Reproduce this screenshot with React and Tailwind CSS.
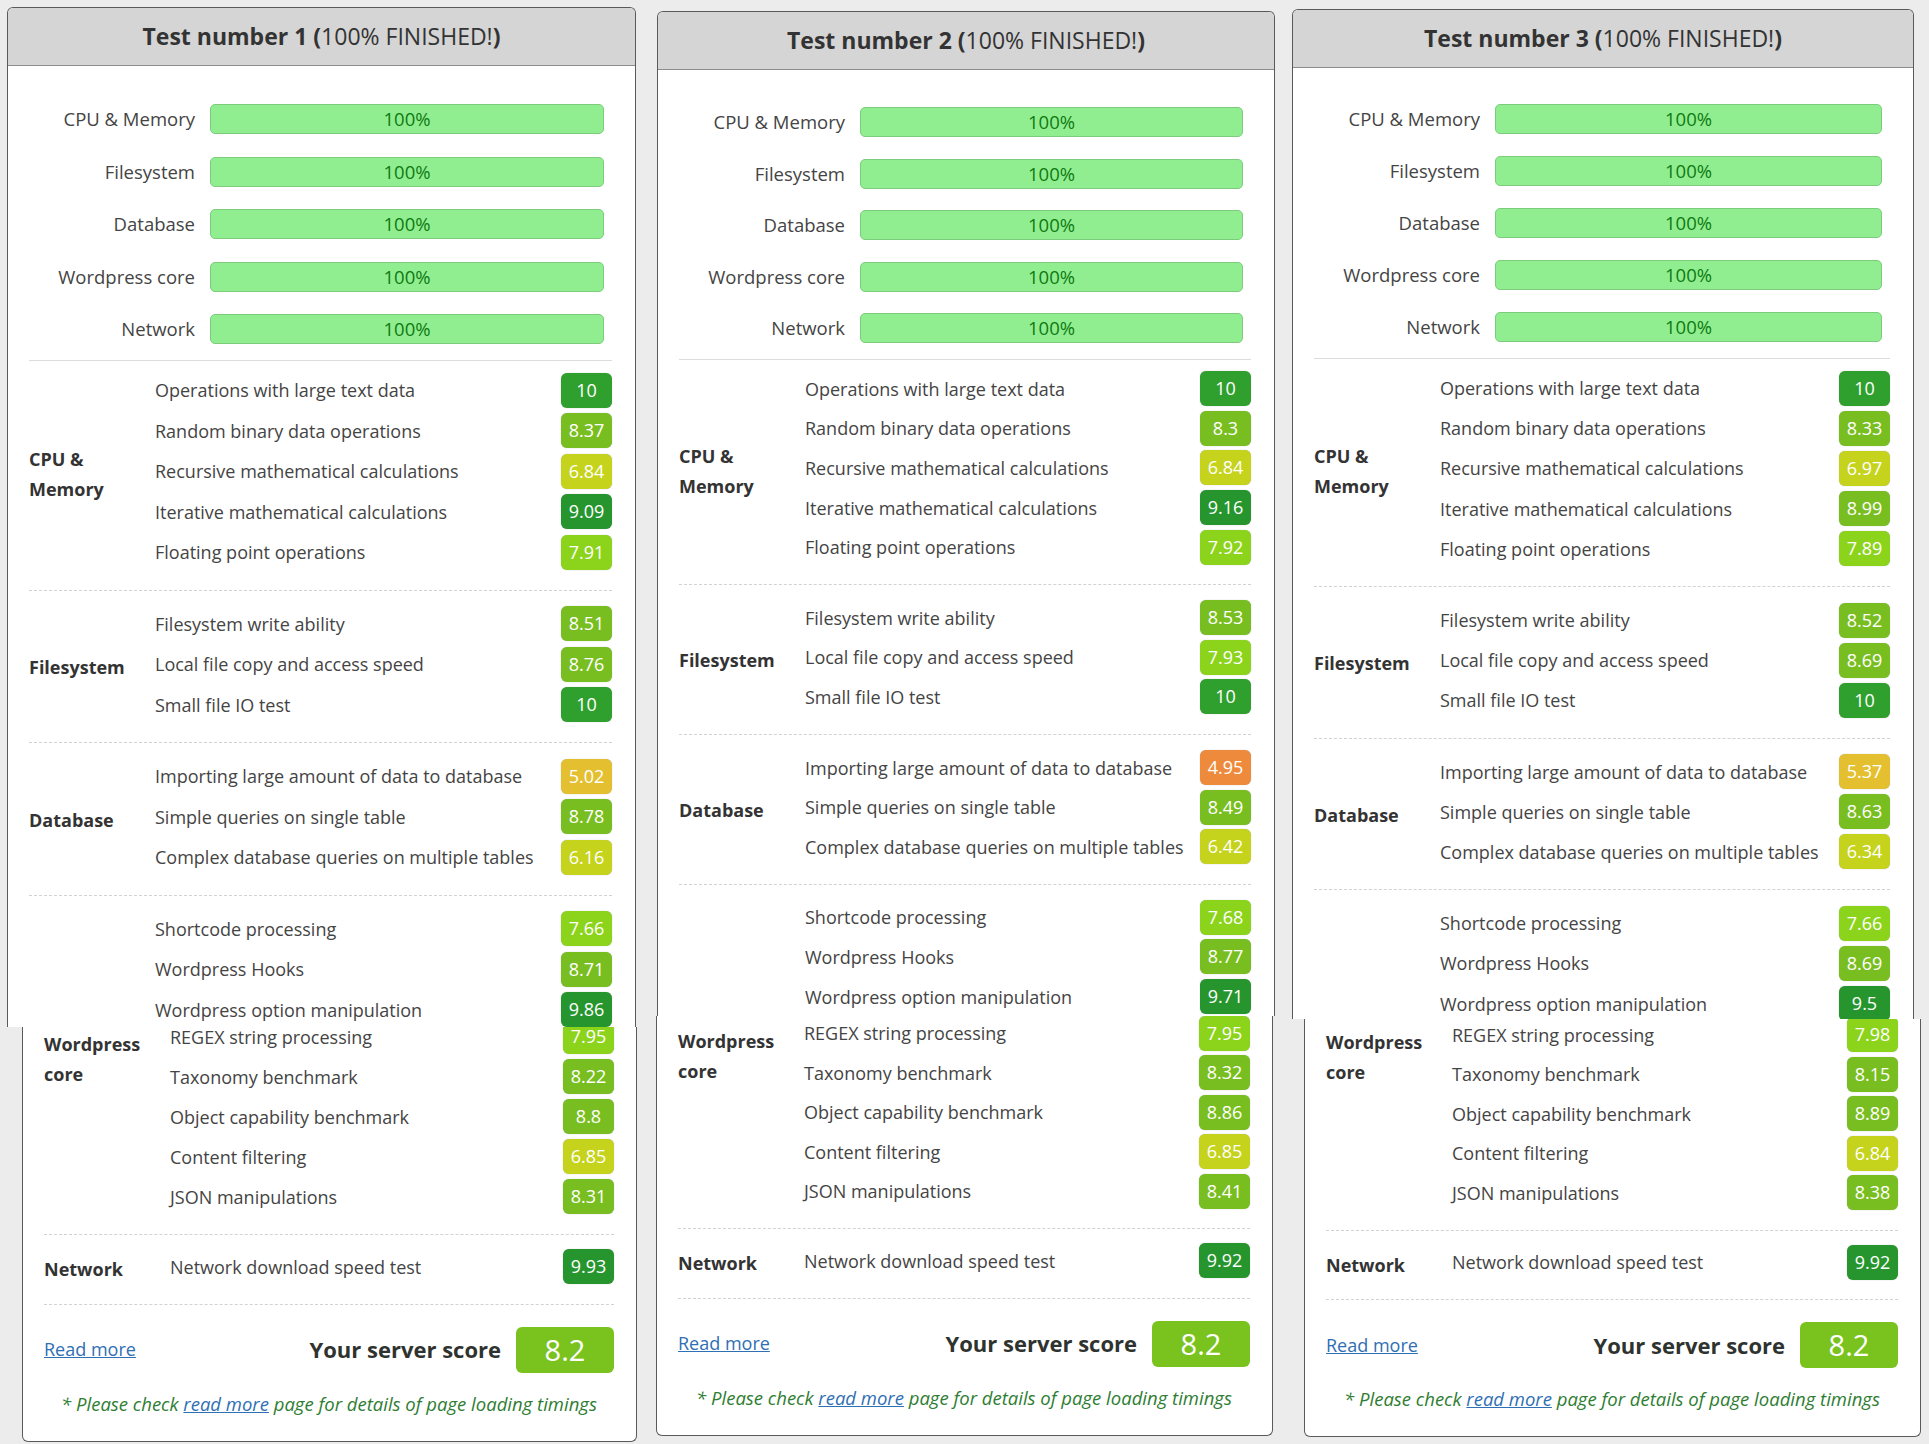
import React from 'react';

const BARS = ['CPU & Memory', 'Filesystem', 'Database', 'Wordpress core', 'Network'];

const NAMES = {
  cpu: ['Operations with large text data', 'Random binary data operations', 'Recursive mathematical calculations', 'Iterative mathematical calculations', 'Floating point operations'],
  fs: ['Filesystem write ability', 'Local file copy and access speed', 'Small file IO test'],
  db: ['Importing large amount of data to database', 'Simple queries on single table', 'Complex database queries on multiple tables'],
  wp: ['Shortcode processing', 'Wordpress Hooks', 'Wordpress option manipulation', 'REGEX string processing', 'Taxonomy benchmark', 'Object capability benchmark', 'Content filtering', 'JSON manipulations'],
  net: ['Network download speed test'],
};

// per-column geometry (the reference is three stitched screenshots)
const TESTS = [
  {
    n: 1,
    wrap: 'ml-[7px]',
    top: 'mt-[7px] h-[1020px] w-[629px]',
    bars: 'gap-[22.5px] pt-[38px]',
    row: 'h-[40.5px]',
    bottom: 'ml-[15px] w-[615px]',
    bRow: 'h-[40px]',
    bShift: 'mt-[-10.5px]',
    scores: {
      cpu: ['10', '8.37', '6.84', '9.09', '7.91'],
      fs: ['8.51', '8.76', '10'],
      db: ['5.02', '8.78', '6.16'],
      wp: ['7.66', '8.71', '9.86', '7.95', '8.22', '8.8', '6.85', '8.31'],
      net: ['9.93'],
    },
  },
  {
    n: 2,
    wrap: 'ml-[19px]',
    top: 'mt-[11px] ml-[1px] h-[1005px] w-[618px]',
    bars: 'gap-[21.5px] pt-[37px]',
    row: 'h-[39.6px]',
    bottom: 'w-[617px]',
    bRow: 'h-[39.5px]',
    bShift: 'mt-[-2.5px]',
    scores: {
      cpu: ['10', '8.3', '6.84', '9.16', '7.92'],
      fs: ['8.53', '7.93', '10'],
      db: ['4.95', '8.49', '6.42'],
      wp: ['7.68', '8.77', '9.71', '7.95', '8.32', '8.86', '6.85', '8.41'],
      net: ['9.92'],
    },
  },
  {
    n: 3,
    wrap: 'ml-[17px]',
    top: 'mt-[9px] h-[1010px] w-[622px]',
    bars: 'gap-[22px] pt-[36px]',
    row: 'h-[40.2px]',
    bottom: 'ml-[12px] w-[617px]',
    bRow: 'h-[39.5px]',
    bShift: 'mt-[-4px]',
    scores: {
      cpu: ['10', '8.33', '6.97', '8.99', '7.89'],
      fs: ['8.52', '8.69', '10'],
      db: ['5.37', '8.63', '6.34'],
      wp: ['7.66', '8.69', '9.5', '7.98', '8.15', '8.89', '6.84', '8.38'],
      net: ['9.92'],
    },
  },
];

function badgeColor(v) {
  const x = parseFloat(v);
  if (x >= 10) return 'bg-[#2fa02e]';
  if (x >= 9) return 'bg-[#26952d]';
  if (x >= 8) return 'bg-[#79be20]';
  if (x >= 7) return 'bg-[#8cd31b]';
  if (x >= 6) return 'bg-[#c5d31c]';
  if (x >= 5) return 'bg-[#e4c030]';
  return 'bg-[#ee8a3c]';
}

function Row({ name, value, h }) {
  return (
    <div className={`${h} flex items-center justify-between`}>
      <span className="text-[#444] leading-[18px]">{name}</span>
      <span className={`${badgeColor(value)} w-[51px] h-[35px] rounded-[6px] flex items-center justify-center text-white shadow-[0_0_1px_rgba(0,0,0,0.35)]`}>
        {value}
      </span>
    </div>
  );
}

function Group({ label, names, values, h, first, hideLabel }) {
  return (
    <div className={`flex ${first ? 'pt-[9px]' : 'pt-[13px] border-t border-dashed border-[#d2d2d2]'} pb-[17px]`}>
      <div className="w-[126px] shrink-0 flex items-center pt-[6px] pr-[20px] font-bold text-[#333] leading-[30px]">
        {hideLabel ? '' : label}
      </div>
      <div className="flex-1 flex flex-col">
        {names.map((nm, i) => <Row key={nm} name={nm} value={values[i]} h={h} />)}
      </div>
    </div>
  );
}

function Column({ t }) {
  const s = t.scores;
  return (
    <div className={`${t.wrap} flex flex-col items-start`}>
      {/* upper screenshot */}
      <div className={`${t.top} bg-white border-x border-t border-[#5a5a5a] rounded-t-[6px] overflow-hidden`}>
        <div className="h-[58px] bg-[#d5d5d5] border-b border-[#8c8c8c] flex items-center justify-center text-[23px] text-[#333]">
          <span className="font-bold">Test number {t.n} (</span>
          <span>100% FINISHED!</span>
          <span className="font-bold">)</span>
        </div>
        <div className="pl-[21px] pr-[23px]">
          <div className={`${t.bars} flex flex-col pb-[16px] text-[18.5px]`}>
            {BARS.map(b => (
              <div key={b} className="flex items-center">
                <span className="w-[166px] shrink-0 text-right text-[#444]">{b}</span>
                <div className="ml-[15px] mr-[8px] flex-1 h-[30px] bg-[#90ee90] border border-[#7ccc7c] rounded-[5px] flex items-center justify-center text-[#0f7a12]">
                  100%
                </div>
              </div>
            ))}
          </div>
          <div className="border-t border-[#dcdcdc]" />
          <Group first label="CPU & Memory" names={NAMES.cpu} values={s.cpu} h={t.row} />
          <Group label="Filesystem" names={NAMES.fs} values={s.fs} h={t.row} />
          <Group label="Database" names={NAMES.db} values={s.db} h={t.row} />
          <Group hideLabel label="Wordpress core" names={NAMES.wp.slice(0, 3)} values={s.wp.slice(0, 3)} h={t.row} />
        </div>
      </div>

      {/* lower screenshot */}
      <div className={`${t.bottom} bg-white border-x border-b border-[#5a5a5a] rounded-b-[6px] overflow-hidden pl-[21px] pr-[22px]`}>
        <div className={`${t.bShift} flex pb-[17px]`}>
          <div className="w-[126px] shrink-0 pt-[12px] pr-[20px] font-bold text-[#333] leading-[30px]">Wordpress core</div>
          <div className="flex-1 flex flex-col">
            {NAMES.wp.slice(3).map((nm, i) => <Row key={nm} name={nm} value={s.wp[i + 3]} h={t.bRow} />)}
          </div>
        </div>
        <div className="flex pt-[12px] pb-[17px] border-t border-dashed border-[#d2d2d2]">
          <div className="w-[126px] shrink-0 flex items-center pt-[6px] font-bold text-[#333]">Network</div>
          <div className="flex-1"><Row name={NAMES.net[0]} value={s.net[0]} h={t.bRow} /></div>
        </div>
        <div className="pt-[22px] border-t border-dashed border-[#d2d2d2] flex items-center justify-between">
          <a href="#" className="text-[#2f6fb3] underline">Read more</a>
          <div className="flex items-center gap-[15px]">
            <span className="text-[22px] font-bold text-[#2f332f]">Your server score</span>
            <span className="w-[98px] h-[46px] rounded-[6px] bg-[#7ac31f] text-white text-[29px] flex items-center justify-center">8.2</span>
          </div>
        </div>
        <p className="mt-[18px] pb-[24px] text-center italic text-[#2e7d32] text-[18.5px] leading-[26px] whitespace-nowrap">
          * Please check <a href="#" className="text-[#2f6fb3] underline">read more</a> page for details of page loading timings
        </p>
      </div>
    </div>
  );
}

export default function App() {
  return (
    <div className="w-[1929px] h-[1444px] overflow-hidden bg-[#ececec] flex items-start font-['Open_Sans',sans-serif] text-[18px]">
      {TESTS.map(t => <Column key={t.n} t={t} />)}
    </div>
  );
}
